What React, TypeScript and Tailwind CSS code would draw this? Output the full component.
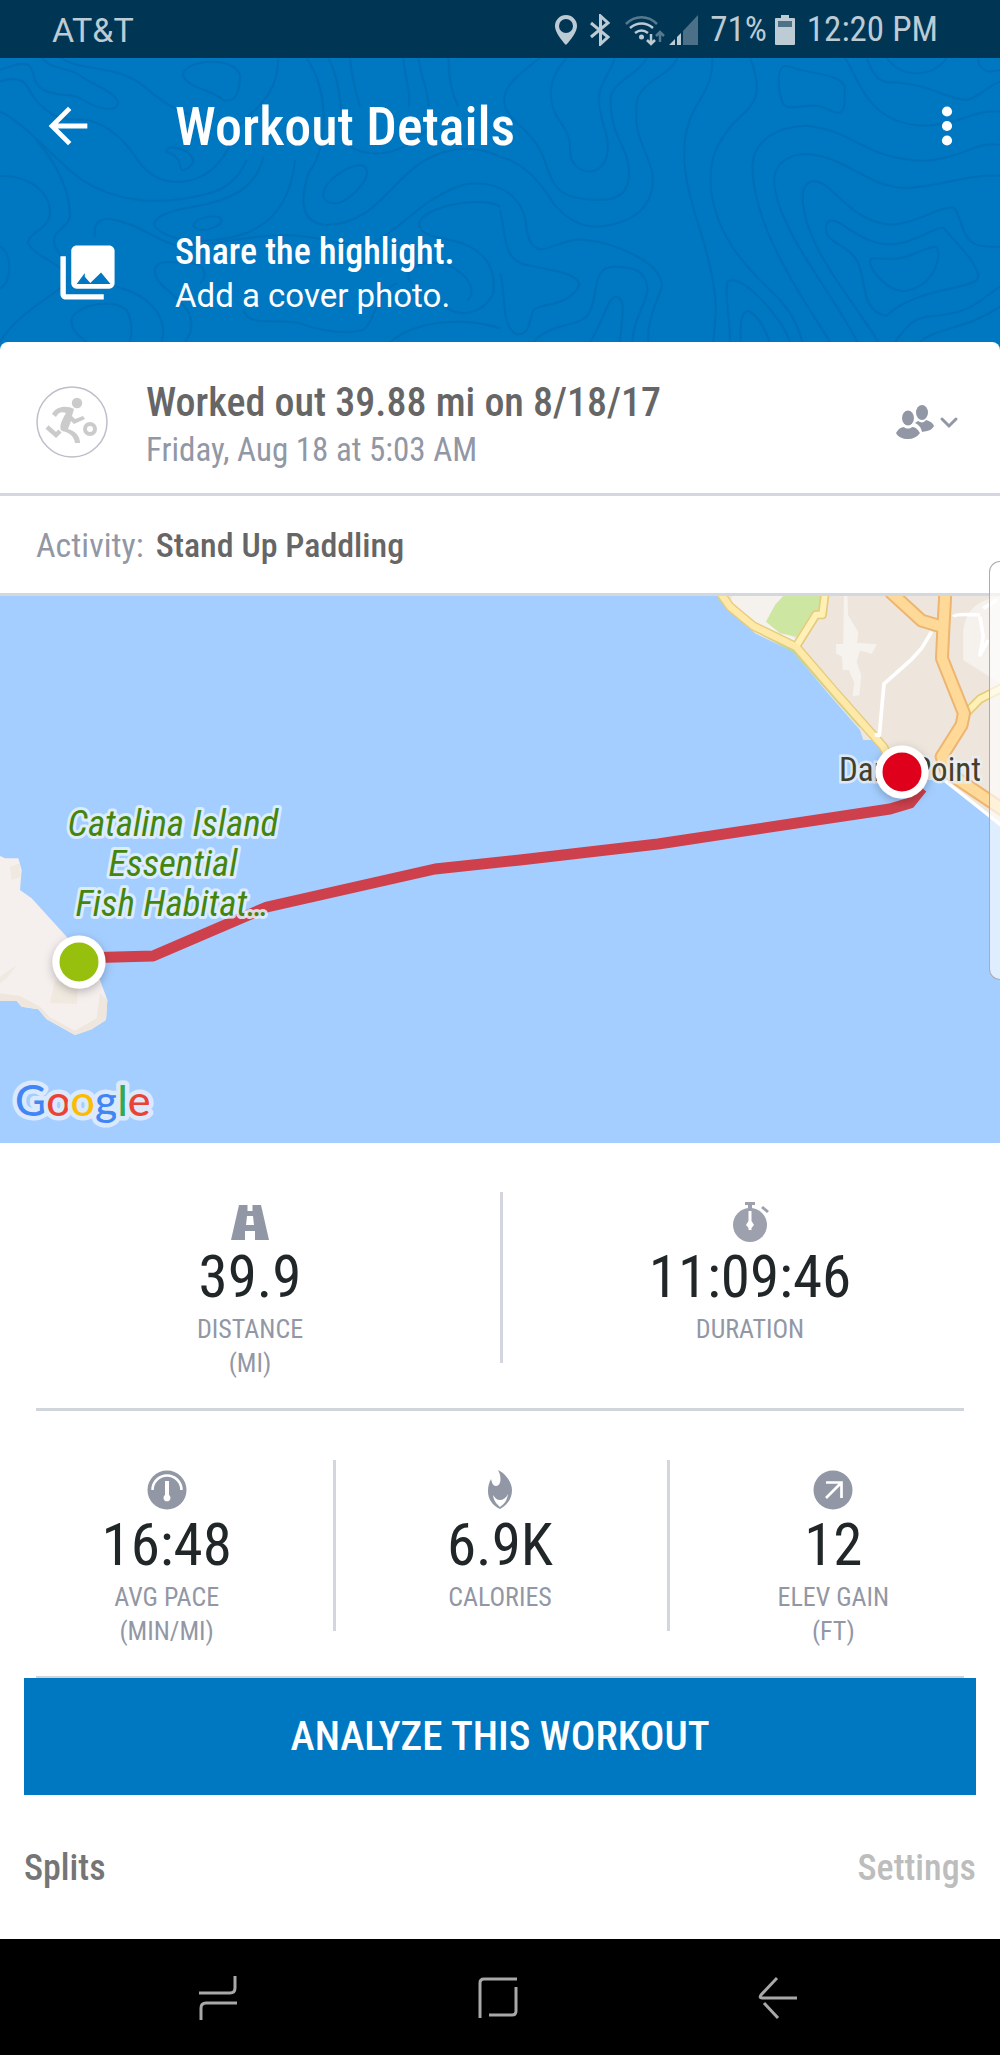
// src/components/workout/WorkoutDetails.tsx
import React from 'react';

interface Stat {
  icon: React.ReactNode;
  value: string;
  label: string;
  unit?: string;
}

const StatusBar: React.FC = () => (
  <div className="flex h-[58px] items-center justify-between bg-[#003554] pt-0.5 pr-[62px] pl-[52px] text-[#bccbd4]">
    <span className="font-[Roboto,sans-serif] text-[34px]">AT&amp;T</span>
    <div className="flex items-center text-[35px]">
      <svg className="h-[32px] w-[150px]" viewBox="552 13 150 32" fill="currentColor" aria-hidden="true">
        {/* location */}
        <path fillRule="evenodd" d="M566 14a11 11 0 0 0-11 11c0 8 11 19 11 19s11-11 11-19a11 11 0 0 0-11-11zm0 4a7 7 0 1 1 0 14 7 7 0 0 1 0-14z" />
        {/* bluetooth */}
        <path d="M591 22l17 14-7.500 7V15l7.500 7-17 14" fill="none" stroke="currentColor" strokeWidth="3" />
        {/* wifi with the transfer arrows */}
        <g fill="none" stroke="currentColor" strokeWidth="2.500">
          <path d="M626 23c9-9 22-9 31 0" opacity=".45" />
          <path d="M630 27c7-6 16-6 23 0M635 32c4-3 9-3 13 0" />
          <path d="M651 33v9M647 39l4 4 4-4" />
          <path d="M660 41v-8M656 35l4-4 4 4" opacity=".45" />
        </g>
        <circle cx="641.500" cy="36" r="2.500" />
        {/* signal */}
        <path d="M669 44l6-6v6zM677 36l4-4v12h-4z" />
        <path d="M683 30l15-16v30h-15z" opacity=".4" />
      </svg>
      <span className="ml-2">71%</span>
      <svg className="mx-2 h-[30px] w-[20px]" viewBox="0 0 20 30" fill="currentColor" aria-hidden="true">
        <path d="M6 0h8v3h5a1 1 0 0 1 1 1v25a1 1 0 0 1-1 1H1a1 1 0 0 1-1-1V4a1 1 0 0 1 1-1h5z" />
        <path d="M3 6h14v6H3z" fill="#4d7187" />
      </svg>
      <span className="ml-1">12:20 PM</span>
    </div>
  </div>
);

// Contour lines behind the header
const Contours: React.FC = () => (
  <svg
    className="absolute inset-0 h-full w-full"
    viewBox="0 174 3000 852"
    preserveAspectRatio="xMidYMid slice"
    fill="none"
    stroke="#006fb7"
    strokeWidth="6"
    aria-hidden="true"
  >
    <path d="M0 210C30 200 60 185 85 195C105 210 95 250 130 270C190 295 210 275 250 300C290 325 345 340 355 310C345 270 280 260 230 220C200 205 150 205 125 174" />
    <path d="M0 245C40 230 70 235 85 265C100 295 120 320 160 345C200 360 230 360 250 358C330 370 380 430 420 490C460 540 520 560 590 535C660 510 690 440 715 380C760 330 835 290 835 174" />
    <path d="M180 174C250 215 340 195 420 250C480 300 520 330 580 345" />
    <path d="M550 220C560 180 700 165 720 225C720 270 710 310 670 300C640 270 545 260 550 220z" />
    <path d="M0 335C60 360 150 460 220 520C300 590 420 610 520 600C640 585 700 570 740 480" />
    <path d="M0 528C80 525 150 570 150 640C145 690 80 700 85 730C110 780 210 790 195 850C160 890 50 940 0 1026" />
    <path d="M110 420C160 480 210 560 210 650C200 690 150 690 165 740C180 760 180 770 190 780" />
    <path d="M0 740C40 760 35 850 0 865" />
    <path d="M500 455C495 430 560 445 575 470C590 490 560 510 545 510C535 495 550 475 500 455z" />
    <path d="M790 470C770 560 700 600 580 620C520 630 450 650 465 680C490 710 560 730 640 720C780 710 870 640 885 480" />
    <path d="M580 675C590 650 660 640 665 660C660 690 585 700 580 675z" />
    <path d="M285 710C280 680 290 655 330 657C420 670 460 720 540 740C640 740 720 705 860 705C980 710 1020 740 1100 735C1200 700 1260 590 1400 552C1500 540 1575 590 1580 690C1590 740 1610 755 1640 745C1700 725 1720 715 1760 720C1850 730 1990 790 1985 860C1970 910 1940 960 1945 1026" />
    <path d="M920 174C990 280 985 440 925 520C900 600 900 670 980 675C1120 670 1160 560 1260 490C1350 430 1440 440 1500 470C1580 490 1630 560 1660 610C1710 670 1770 690 1830 675C1930 655 1970 590 1955 510C1930 430 1900 400 1910 310C1920 240 2010 230 2032 174" />
    <path d="M985 174C1040 280 1010 400 1050 440C1120 480 1220 460 1290 380M1050 174C1055 240 1070 280 1080 320M1210 174C1215 240 1235 280 1225 320M1255 174C1265 240 1290 290 1285 320M1345 174C1345 250 1360 290 1375 320" />
    <path d="M970 580C975 540 1060 480 1095 500C1120 530 1060 590 1020 608C980 615 970 600 970 580z" />
    <path d="M1500 620C1460 590 1300 610 1260 660C1245 700 1300 710 1350 720C1450 740 1490 800 1480 880C1450 940 1390 950 1350 930C1300 900 1240 880 1225 830C1220 790 1320 770 1370 810C1420 840 1425 890 1400 900" />
    <path d="M260 1026C240 1010 210 990 215 960C220 920 330 890 380 930C400 970 395 1000 390 1026M350 860C430 880 510 940 485 1026M465 820C470 870 600 910 570 1000L555 1026M465 820C460 770 520 790 580 790C620 800 620 830 600 850" />
    <path d="M730 930C740 980 830 955 900 970C980 1000 1050 1000 1090 990C1130 960 1120 880 1190 850M1170 1026C1250 960 1400 950 1500 985" />
    <g transform="translate(1500 0)">
      <path d="M120 174C60 220 0 260 15 320C40 380 90 380 130 470C160 560 170 600 300 600C380 600 400 550 380 470C350 400 330 370 332 290C345 240 420 220 440 174" />
      <path d="M200 174C140 240 145 300 170 350C230 430 200 440 215 480C240 525 300 530 320 470C335 400 295 370 297 290C300 240 335 220 343 174" />
      <path d="M637 174C640 300 555 300 552 460C555 620 640 740 648 930L640 1026" />
      <path d="M750 174C800 300 750 320 700 370C650 430 630 470 632 550C640 720 770 830 830 890C870 930 895 980 907 1026" />
      <path d="M838 220C845 190 860 195 890 207C960 225 1020 225 1035 260C1032 290 1040 335 1015 338C980 335 970 310 920 318C880 322 850 330 845 300C835 270 835 240 838 220z" />
      <path d="M1035 174C1080 240 1100 370 1270 377C1380 375 1430 325 1500 335" />
      <path d="M1100 174C1120 230 1140 250 1180 247C1280 250 1350 300 1400 300C1440 290 1460 260 1500 245" />
      <path d="M1160 174C1210 240 1300 230 1340 174M1435 174C1435 215 1470 220 1500 210" />
      <path d="M990 1026C940 940 760 700 757 500C760 420 830 380 920 377C1060 390 1100 480 1270 482C1380 480 1430 420 1500 435" />
      <path d="M1072 1026C1000 880 830 690 822 540C825 480 880 462 920 462C1040 470 1100 560 1215 564C1330 560 1400 520 1500 527" />
      <path d="M1135 1026C1060 900 910 740 908 590C910 540 940 535 975 555C1030 600 1080 670 1180 674C1270 665 1310 620 1360 622C1390 650 1380 735 1450 738L1500 742" />
      <path d="M978 690C975 660 995 655 1020 670C1080 710 1120 735 1180 733C1260 725 1300 680 1330 683C1360 720 1435 790 1435 830C1430 870 1250 860 1160 947C1080 940 1100 830 1070 780C1040 730 980 730 978 690z" />
      <path d="M1110 790C1105 760 1150 785 1200 775C1260 760 1290 735 1310 742C1325 760 1310 860 1210 874C1160 870 1120 820 1110 790z" />
      <path d="M1185 1026C1220 980 1240 950 1300 948C1420 940 1450 890 1500 860M1260 1026C1310 980 1400 990 1500 920" />
      <path d="M690 1026C690 950 670 860 685 843C730 820 850 960 870 1026M722 1026C720 960 725 935 745 933C780 950 800 1000 808 1026" />
      <path d="M0 630C20 720 10 770 70 793C150 810 240 820 238 855C210 920 120 910 100 930C85 970 90 1005 50 1003C0 980 20 880 0 820" />
      <path d="M100 1026C150 970 230 980 260 950C300 900 270 800 340 800C400 800 440 810 443 870C430 930 400 960 397 1026M270 1026C310 970 320 890 350 890C380 895 365 960 360 1026" />
    </g>
  </svg>
);

const Header: React.FC = () => (
  <header className="relative bg-[#0077c1] text-white">
    <Contours />
    <div className="relative flex h-[136px] items-center pr-6 pl-[39px]">
      <button type="button" aria-label="Back">
        <svg className="size-[58px]" viewBox="0 0 24 24" fill="currentColor">
          <path d="M20 11H7.830l5.590-5.590L12 4l-8 8 8 8 1.410-1.410L7.830 13H20v-2z" />
        </svg>
      </button>
      <h1 className="ml-[78px] flex-1 pt-0.5 text-[54px] leading-[64px] font-medium">Workout Details</h1>
      <button type="button" aria-label="More options">
        <svg className="size-[58px]" viewBox="0 0 24 24" fill="currentColor">
          <circle cx="12" cy="6" r="2.100" />
          <circle cx="12" cy="12" r="2.100" />
          <circle cx="12" cy="18" r="2.100" />
        </svg>
      </button>
    </div>
    <button type="button" className="relative flex h-[148px] w-full items-center pt-2 pl-[55px] text-left">
      <svg className="size-[65px]" viewBox="0 0 24 24" fill="currentColor" aria-hidden="true">
        <path d="M22 16V4c0-1.100-.900-2-2-2H8c-1.100 0-2 .900-2 2v12c0 1.100.900 2 2 2h12c1.100 0 2-.900 2-2zm-11-2.400l2.030 2.300L17 12l3.500 4.200H8l3-4zM2 6v14c0 1.100.900 2 2 2h14v-2H4V6H2z" />
      </svg>
      <span className="ml-[55px] pt-1">
        <span className="block text-[36px] leading-[43px] font-medium">Share the highlight.</span>
        <span className="block font-[Roboto,sans-serif] text-[33px] leading-[43px]">Add a cover photo.</span>
      </span>
    </button>
  </header>
);

const Summary: React.FC = () => (
  <section className="rounded-t-lg bg-white">
    <div className="flex h-[154px] items-center border-b-[3px] border-[#d5d7e0] px-9 pt-2">
      <svg className="size-[72px]" viewBox="0 0 72 72" fill="#cbcbcb" aria-hidden="true">
        <circle cx="36" cy="36" r="35" fill="none" stroke="#bdbfc9" strokeWidth="1.500" />
        <circle cx="41" cy="17" r="5.200" />
        <path d="M16 28c4-8 15-9 22-5l-2 7 3 3 8-3 2 3-11 5-3-3-3 8c8 2 12 8 12 14h-5c-1-8-7-11-13-12-3-2-2-8 4-18-5-2-8 0-10 4z" />
        <path d="M11 41l9 8 4-4" fill="none" stroke="#cbcbcb" strokeWidth="4.500" />
        <circle cx="54" cy="43" r="5" fill="none" stroke="#cbcbcb" strokeWidth="4" />
      </svg>
      <div className="ml-[38px] flex-1 pt-2">
        <h2 className="text-[40px] leading-[48px] font-medium text-[#666]">Worked out 39.88 mi on 8/18/17</h2>
        <p className="text-[33px] leading-[46px] text-[#9297a5]">Friday, Aug 18 at 5:03 AM</p>
      </div>
      <button type="button" aria-label="Privacy: friends" className="mr-1">
        <svg className="h-[36px] w-[64px]" viewBox="0 0 64 36" fill="#9297a5">
          <ellipse cx="26" cy="8.500" rx="6" ry="7.500" />
          <path d="M19 19l3-2c3 2 6 2 8-1 4 1 7 3 8 6-2 4-6 5-12 6-1-5-3-7-7-9z" />
          <ellipse cx="12" cy="14" rx="7" ry="9" fill="#fff" />
          <ellipse cx="12" cy="14" rx="6" ry="7.500" />
          <path d="M0 29c2-4 5-6 8-6 2 2 6 2 8 0 4 0 6 3 8 6-3 4-7 6-12 6S2 33 0 29z" />
          <path d="M46 15l7 7 7-7" fill="none" stroke="#9297a5" strokeWidth="3" strokeLinecap="round" />
        </svg>
      </button>
    </div>
    <p className="flex h-[100px] items-center gap-3 border-b-[3px] border-[#d3d7de] px-9 pt-0.5 text-[34px] text-[#9297a5]">
      Activity: <strong className="font-medium text-[#666]">Stand Up Paddling</strong>
    </p>
  </section>
);

const RouteMap: React.FC = () => (
  <svg
    className="block w-full bg-[#a4ceff]"
    viewBox="0 596 1000 547"
    role="img"
    aria-label="Route from Catalina Island to Dana Point"
  >
    <defs>
      <filter id="pinShadow" x="-50%" y="-50%" width="200%" height="200%">
        <feDropShadow dx="0" dy="3" stdDeviation="5" floodOpacity=".25" />
      </filter>
    </defs>

    {/* mainland */}
    <g transform="translate(600 580) scale(.3333)">
      <path d="M355 40L380 80L430 125L465 160L580 215L680 335L780 450L790 480L820 480L850 520L900 600L1035 600L1200 740V40z" fill="#eee6dd" />
      <path d="M400 40H560L498 125L590 178L585 190L470 130L390 70z" fill="#f5f2ee" />
      <path d="M550 48H665L655 90L635 100L590 170L540 160L498 125L525 75z" fill="#cde6a2" />
      <path d="M732 40h10l2 65 31 52-4 32 60 4-16 28-35-10-10 35 14 40-6 60-20 2 5-40-17-38h-17l-3-40-18-10v-28h22z" fill="#f6f3ef" />
      <path d="M1090 150C1100 80 1140 60 1200 50V310L1090 240z" fill="#f5f2ee" />
      <path d="M355 56L460 148L580 214L780 440" fill="none" stroke="#b5d9a0" strokeWidth="6" />
      <g fill="none" strokeLinejoin="round">
        <path d="M675 40L667 104L648 104L588 200M1100 398L1140 357L1210 322" stroke="#e5cb7d" strokeWidth="28" />
        <path d="M362 40L390 80L460 138L588 200L700 330L850 500L880 560" stroke="#e5cb7d" strokeWidth="28" />
        <path d="M675 40L667 104L648 104L588 200M1100 398L1140 357L1210 322" stroke="#fff0b5" strokeWidth="18" />
        <path d="M362 40L390 80L460 138L588 200L700 330L850 500L880 560" stroke="#ffe9a8" strokeWidth="20" />
        <path d="M995 155L965 205L935 238L852 312L838 466L824 464M1060 110Q1065 100 1140 105M1150 85L1190 60M1140 110L1150 170L1140 225L1165 180" stroke="#fff" strokeWidth="11" />
        <path d="M870 35L965 122L1025 140M1036 40L1030 150L1026 235L1092 400L1085 435L1025 530L1040 575L1210 690" stroke="#edb570" strokeWidth="42" />
        <path d="M870 35L965 122L1025 140M1036 40L1030 150L1026 235L1092 400L1085 435L1025 530L1040 575L1210 690" stroke="#ffd998" strokeWidth="30" />
        <path d="M1035 602L1165 705L1210 740" stroke="#fff" strokeWidth="10" />
      </g>
    </g>

    {/* Catalina Island */}
    <g transform="translate(0 780) scale(.3333)">
      <path d="M0 228L15 235L55 235L65 270L60 330L95 355L200 470L300 600L322 660L318 720L275 748L225 765L140 718L115 688L65 680L50 663L0 663z" fill="#f5efee" />
      <path d="M0 640L60 648L120 680L150 712L225 752L290 715L300 640L322 660L318 720L275 748L225 765L140 718L115 688L65 680L50 663L0 663z" fill="#efe7dd" />
      <path d="M165 600L235 620L230 672L150 668zM0 590L50 555L20 595L0 610zM30 260L60 250L62 290L35 300z" fill="#efe9df" />
    </g>

    <path
      d="M80 958L153 956L267 907L435 869L520 860L658 844L890 809L910 803L922 788"
      fill="none"
      stroke="#ce414c"
      strokeWidth="11"
      strokeLinejoin="round"
    />

    <g
      fontSize="37"
      fontStyle="italic"
      textAnchor="middle"
      fill="#45850c"
      stroke="#e6f2ff"
      strokeOpacity=".85"
      strokeWidth="6"
      strokeLinejoin="round"
      paintOrder="stroke"
    >
      <text x="173" y="836">Catalina Island</text>
      <text x="173" y="876">Essential</text>
      <text x="172" y="916">Fish Habitat…</text>
    </g>
    <text x="839" y="781" fontSize="33" fill="#44402c" stroke="#eaf1f8" strokeOpacity=".8" strokeWidth="5" paintOrder="stroke">
      Dana Point
    </text>

    <g stroke="#fff" strokeWidth="7" filter="url(#pinShadow)">
      <circle cx="79" cy="962" r="23" fill="#97bf0f" />
      <circle cx="902" cy="772" r="23" fill="#df001c" />
    </g>

    <text
      x="15"
      y="1116"
      className="font-[Lato,sans-serif]"
      fontSize="43"
      fontWeight="500"
      stroke="#dbe9fc"
      strokeWidth="9"
      strokeLinejoin="round"
      paintOrder="stroke"
    >
      <tspan fill="#4285f4">G</tspan>
      <tspan fill="#ea4335">o</tspan>
      <tspan fill="#fbbc05">o</tspan>
      <tspan fill="#4285f4">g</tspan>
      <tspan fill="#34a853">l</tspan>
      <tspan fill="#ea4335">e</tspan>
    </text>
  </svg>
);

const topStats: Stat[] = [
  {
    value: '39.9',
    label: 'DISTANCE',
    unit: '(MI)',
    icon: <path fillRule="evenodd" d="M9 3h8.500v6h5V3H31l8 35H25v-9h-10v9H1zM17 14l-1 9h8l-1-9z" />,
  },
  {
    value: '11:09:46',
    label: 'DURATION',
    icon: (
      <g opacity=".9">
        <circle cx="20" cy="23" r="17" />
        <path d="M15 0h10v3h-3v5h-4V3h-3zM33 4l6 5-2 2-6-5z" />
        <path d="M18.500 9h3v10l2.500 4-2.500 3v2h-3v-2l-2.500-3 2.500-4z" fill="#fff" />
      </g>
    ),
  },
];

const bottomStats: Stat[] = [
  {
    value: '16:48',
    label: 'AVG PACE',
    unit: '(MIN/MI)',
    icon: (
      <>
        <circle cx="20" cy="20" r="19.500" />
        <path d="M5.500 20a14.500 14.500 0 0 1 29 0" fill="none" stroke="#fff" strokeWidth="2.500" />
        <path d="M18 11h4v14a3.500 3.500 0 1 1-4 0z" fill="#fff" />
      </>
    ),
  },
  {
    value: '6.9K',
    label: 'CALORIES',
    icon: (
      <>
        <path d="M18 0c7 3 14 12 14 20 0 9-5 15-12 19C12 35 8 29 8 21c0-5 1-8 3-12 1 4 2 7 5 7 5 0 6-9 2-16z" />
        <path d="M13 25c1 7 4 9 7 12 4-3 7-6 8-13-2 4-5 6-8 6-3 0-5-2-7-5z" fill="#fff" />
      </>
    ),
  },
  {
    value: '12',
    label: 'ELEV GAIN',
    unit: '(FT)',
    icon: (
      <>
        <circle cx="20" cy="20" r="19.500" />
        <path d="M13 12.500h15.500V28M28 13L13 28" fill="none" stroke="#fff" strokeWidth="2.700" />
      </>
    ),
  },
];

const StatRow: React.FC<{ stats: Stat[] }> = ({ stats }) => (
  <div className="flex h-[265px] items-start pt-[49px]">
    {stats.map((stat, index) => (
      <React.Fragment key={stat.label}>
        {index > 0 && <div className="-mr-[3px] h-[171px] w-[3px] bg-[#d3d6df]" />}
        <dl className="flex flex-1 basis-0 flex-col items-center pt-[10px]">
          <svg className="size-10" viewBox="0 0 40 40" fill="#9297a5" aria-hidden="true">
            {stat.icon}
          </svg>
          <dt className="order-last mt-1 text-center text-[26px] leading-[34px] text-[#9297a5]">
            {stat.label}
            {stat.unit && <span className="block">{stat.unit}</span>}
          </dt>
          <dd className="mt-1 text-[59px] leading-[62px] text-[#212629]">{stat.value}</dd>
        </dl>
      </React.Fragment>
    ))}
  </div>
);

const NavBar: React.FC = () => (
  <nav className="flex h-[116px] items-center bg-black pt-0.5 pr-20 pl-[76px] text-[#a8a8a8]">
    <button type="button" aria-label="Recent apps" className="flex flex-1 justify-center">
      <svg className="size-11" viewBox="0 0 44 44" fill="none" stroke="currentColor" strokeWidth="3">
        <path d="M40 0v12q0 5-5 5H4M42 27H11q-5 0-5 5v12" />
      </svg>
    </button>
    <button type="button" aria-label="Home" className="flex flex-1 justify-center">
      <svg className="size-11" viewBox="0 0 44 44" fill="none" stroke="currentColor" strokeWidth="3">
        <path d="M4 42V7q0-4 4-4h33M40 11v24q0 4-4 4H13" />
      </svg>
    </button>
    <button type="button" aria-label="Back" className="flex flex-1 justify-center">
      <svg className="size-11" viewBox="0 0 44 44" fill="none" stroke="currentColor" strokeWidth="3">
        <path d="M20 2L4 19q-2 3 1 3h35M7 27l14 15" />
      </svg>
    </button>
  </nav>
);

const App: React.FC = () => {
  return (
    <div className="relative bg-white font-['Roboto_Condensed',Roboto,sans-serif]">
      <StatusBar />
      <Header />
      <main>
        <div className="bg-[#0077c1]">
          <Summary />
        </div>
        <RouteMap />
        <StatRow stats={topStats} />
        <hr className="mx-9 border-t-[3px] border-[#d0d5dc]" />
        <StatRow stats={bottomStats} />
        <hr className="mx-9 border-t-2 border-[#d0d5dc]" />
        <div className="px-6">
          <button type="button" className="h-[117px] w-full bg-[#0077c1] text-[41px] font-medium text-white">
            ANALYZE THIS WORKOUT
          </button>
          <div className="flex h-[144px] items-center justify-between pt-0.5 text-[36px] font-medium">
            <h2 className="text-[#757575]">Splits</h2>
            <button type="button" className="text-[#bdbdbd]">Settings</button>
          </div>
        </div>
      </main>
      <NavBar />
      {/* edge panel handle */}
      <div className="absolute top-[561px] right-0 h-[419px] w-[11px] rounded-l-[14px] border border-r-0 border-[#a9adb3] bg-white/65" />
    </div>
  );
};

export default App;
